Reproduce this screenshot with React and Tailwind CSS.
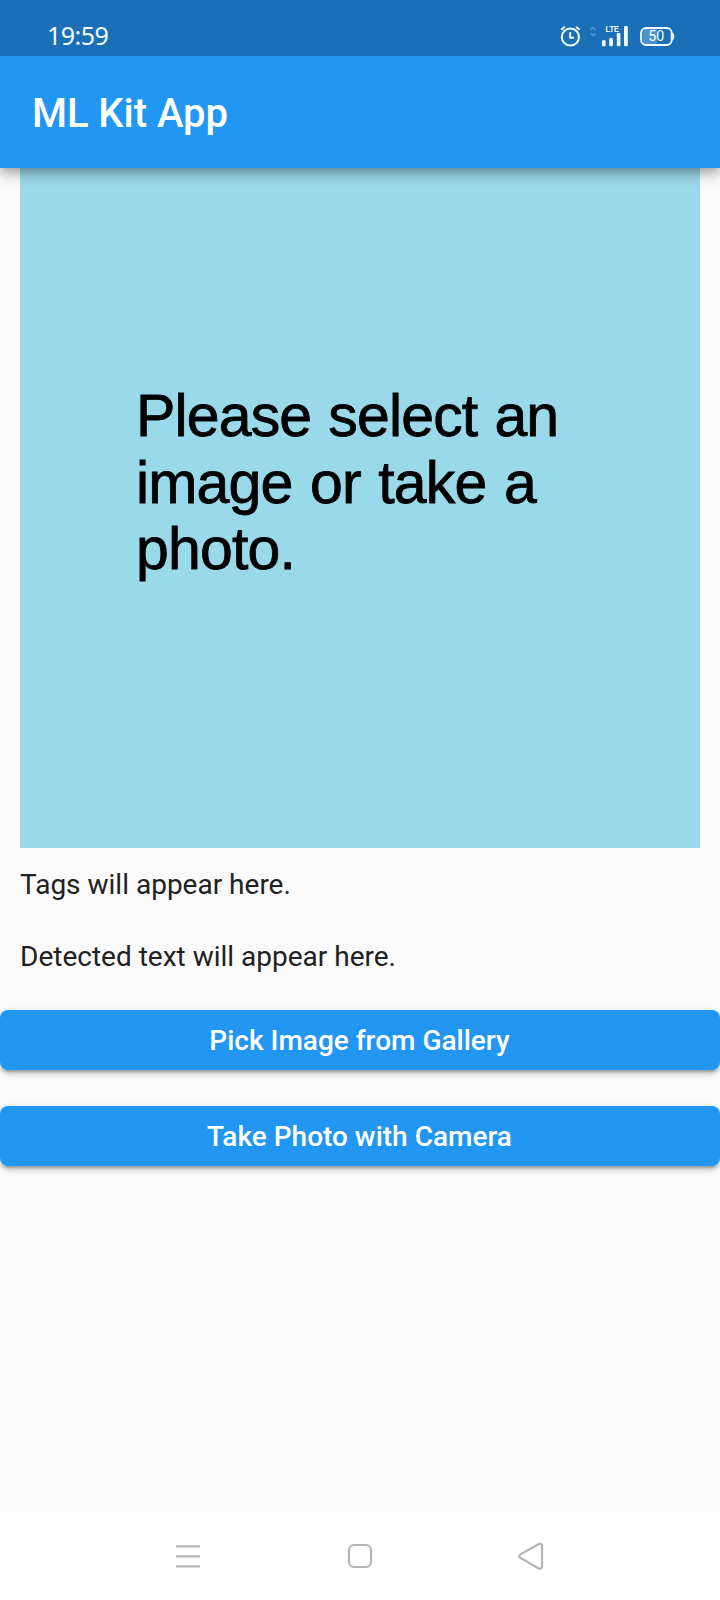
import React from "react";

function StatusIcons() {
  return (
    <svg className="ml-auto h-14 w-[150px]" viewBox="540 0 150 56" fill="none">
      <g stroke="#f2fbff" strokeWidth="2" strokeLinecap="round" strokeLinejoin="round">
        <circle cx="570.4" cy="37" r="8.6" />
        <path d="M561.8 29.2l2.4-2M579 29.2l-2.4-2" />
        <path d="M570.2 33v4.800h3" />
      </g>
      <g stroke="#4a93cd" strokeWidth="1.7">
        <path d="M590.4 29.8l2.600-2.200 2.600 2.200M590.4 33.4l2.600 2.200 2.600-2.200" />
      </g>
      <g fill="#f2fbff">
        <rect x="602" y="40.3" width="3.6" height="5.9" rx="1" />
        <rect x="609.3" y="38" width="3.6" height="8.2" rx="1" />
        <rect x="616.8" y="33" width="3.6" height="13.2" rx="1" />
        <rect x="624" y="26" width="3.8" height="20.2" rx="1" />
        <text x="605.4" y="31.9" fontSize="8.4" fontWeight="700" textLength="13.6" lengthAdjust="spacingAndGlyphs" fontFamily="Liberation Sans, sans-serif">LTE</text>
      </g>
      <path d="M646 29h11v15h-11a3.500 3.500 0 0 1-3.500-3.500v-8a3.500 3.500 0 0 1 3.500-3.500z" fill="#4c90cc" />
      <rect x="641.1" y="28" width="30.6" height="17" rx="5" stroke="#f2fbff" strokeWidth="1.9" />
      <path d="M672 32.600q2.300.6 2.300 3.900t-2.300 3.900z" fill="#f2fbff" />
      <text x="648.300" y="41.300" fontSize="14.500" textLength="16" lengthAdjust="spacingAndGlyphs" fill="#f2fbff" fontFamily="Roboto, sans-serif">50</text>
    </svg>
  );
}

function StatusBar() {
  return (
    <div className="relative z-20 flex h-14 shrink-0 bg-[#1a6fb7] pr-[30px] pl-[47px]">
      <span className="pt-[17px] font-['Noto_Sans',sans-serif] text-[25px] leading-9 tracking-[-0.5px] text-[#f2fbff]">19:59</span>
      <StatusIcons />
    </div>
  );
}

function ActionButton({ children }) {
  return (
    <button className="h-[60px] w-full rounded-lg bg-[#2196f3] pt-0.5 pr-px text-[28px] font-medium text-white shadow-[0_6px_2px_-4px_rgba(0,0,0,0.2),0_4px_4px_0_rgba(0,0,0,0.14),0_2px_8px_0_rgba(0,0,0,0.12)]">
      {children}
    </button>
  );
}

function NavBar() {
  return (
    <nav className="h-[88px] shrink-0 bg-white">
      <svg className="block h-[88px] w-[720px]" viewBox="0 1512 720 88" fill="none" stroke="#b6b6b6" strokeWidth="2.2">
        <path d="M176 1546.400h24M176 1556.400h24M176 1566.400h24" />
        <rect x="349" y="1545" width="22" height="22" rx="5" />
        <path d="M538.400 1544.200l-17.800 10.200q-2.700 1.800 0 3.600l17.800 10.200q3.200 1.500 3.600-1.500v-21q-.4-3-3.600-1.500z" />
      </svg>
    </nav>
  );
}

export default function App() {
  return (
    <div className="flex h-[1600px] w-[720px] flex-col overflow-hidden bg-[#fafafa] font-['Roboto',sans-serif]">
      <StatusBar />
      <header className="relative z-10 flex h-28 shrink-0 items-center bg-[#2196f3] pt-1 pl-8 shadow-[0_4px_8px_-2px_rgba(0,0,0,0.2),0_8px_10px_0_rgba(0,0,0,0.14),0_2px_20px_0_rgba(0,0,0,0.12)]">
        <h1 className="text-[40px] font-medium tracking-[-0.05px] text-white">ML Kit App</h1>
      </header>
      <main className="flex grow flex-col">
        <div className="mx-5 h-[680px] bg-[#9ad9e9] pt-[215px] pl-[116px] font-['Liberation_Sans',sans-serif] text-[59px] leading-[66.500px] tracking-[-0.85px] text-black [word-spacing:1.500px] [-webkit-text-stroke:0.8px_#000]">
          <p>Please select an</p>
          <p className="[word-spacing:2px]">image or take a</p>
          <p>photo.</p>
        </div>
        <p className="mt-[21px] ml-5 text-[28px] leading-8 text-[#212121]">Tags will appear here.</p>
        <p className="mt-10 ml-5 text-[28px] leading-8 text-[#212121]">Detected text will appear here.</p>
        <div className="mt-[37px] flex flex-col gap-9">
          <ActionButton>Pick Image from Gallery</ActionButton>
          <ActionButton>Take Photo with Camera</ActionButton>
        </div>
      </main>
      <NavBar />
    </div>
  );
}
